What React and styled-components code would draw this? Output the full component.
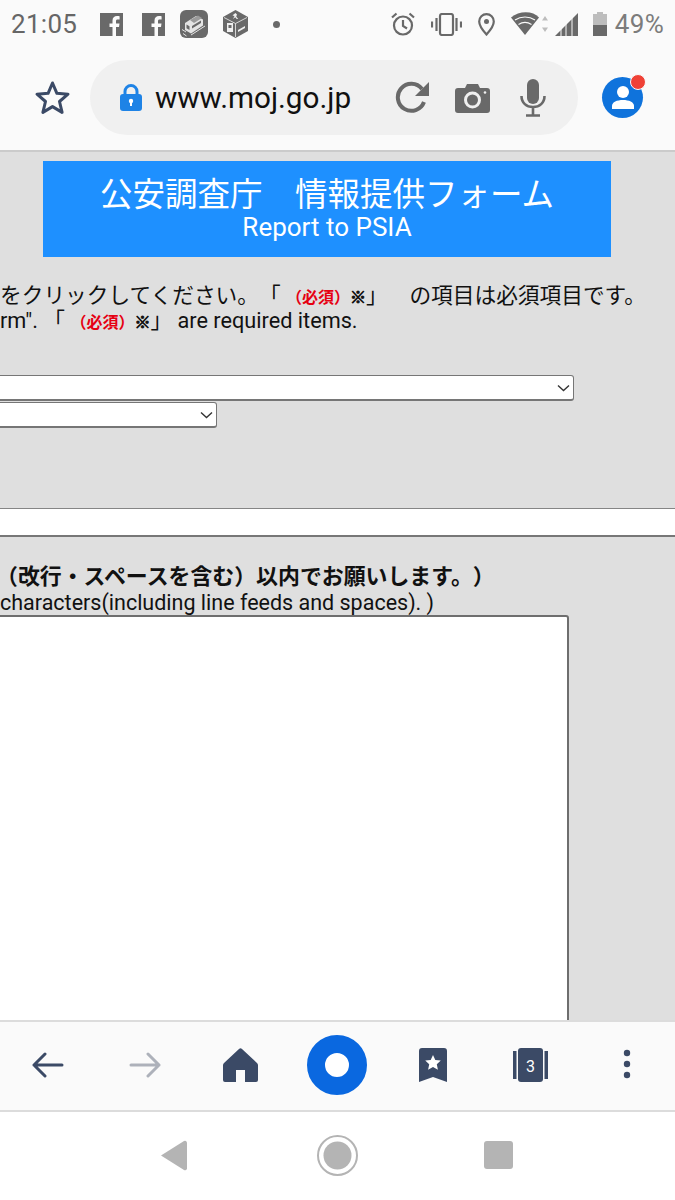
import styled, { createGlobalStyle } from "styled-components";

const GlobalStyle = createGlobalStyle`
    html, body {
        margin: 0;
        padding: 0;
        width: 675px;
        height: 1200px;
        overflow: hidden;
        background: #fff;
        font-family: Roboto, "Noto Sans CJK JP", sans-serif;
        text-spacing-trim: space-all;
    }
`;

const Screen = styled.div`
    width: 675px;
    height: 1200px;
    display: flex;
    flex-direction: column;
    overflow: hidden;
`;

const TopBar = styled.header`
    height: 150px;
    flex: none;
    background: #fafafa;
    border-bottom: 2px solid #cbcbcb;
    display: flex;
    flex-direction: column;
`;

const StatusBar = styled.div`
    height: 46px;
    box-sizing: border-box;
    padding: 2px 11px 0 11px;
    display: flex;
    align-items: center;
    justify-content: space-between;
    color: #6b6b6b;
`;

const StatusGroup = styled.div`
    display: flex;
    align-items: center;
`;

const Slot = styled.span`
    display: flex;
    flex: none;
    margin-left: ${(p) => p.$ml || 0}px;
`;

const StatusText = styled.span`
    font-size: 26px;
    line-height: 44px;
    letter-spacing: 0.3px;
    color: ${(p) => p.$color || "#666"};
`;

const AddressRow = styled.div`
    display: flex;
    align-items: center;
    padding: 14px 0 0 34px;
`;

const UrlPill = styled.div`
    width: 488px;
    height: 75px;
    margin-left: 19px;
    border-radius: 38px;
    background: #f0f0f0;
    display: flex;
    align-items: center;
    padding-left: 30px;
    box-sizing: border-box;
`;

const UrlText = styled.span`
    margin-left: 13px;
    width: 240px;
    font-size: 29.7px;
    color: #111;
`;

const Avatar = styled.div`
    position: relative;
    width: 41px;
    height: 41px;
    margin-left: 24px;
    border-radius: 50%;
    background: #0f73dc;
    display: flex;
    align-items: center;
    justify-content: center;
`;

const AvatarBadge = styled.span`
    position: absolute;
    top: -3px;
    right: -3px;
    width: 14px;
    height: 14px;
    border-radius: 50%;
    background: #ef4136;
    border: 1.5px solid #fafafa;
`;

const Content = styled.main`
    flex: 1;
    min-height: 0;
    background: #dfdfdf;
    overflow: hidden;
    display: flex;
    flex-direction: column;
`;

const Banner = styled.div`
    width: 568px;
    height: 96px;
    margin: 9px 0 0 43px;
    flex: none;
    background: #1e90ff;
    color: #fff;
    display: flex;
    flex-direction: column;
    align-items: center;
    padding-top: 10px;
    box-sizing: border-box;
`;

const BannerTitle = styled.div`
    font-size: 32.5px;
    line-height: 41px;
    font-family: "Noto Sans CJK JP", sans-serif;
    white-space: nowrap;
`;

const BannerSub = styled.div`
    font-size: 26px;
    line-height: 30px;
    white-space: nowrap;
`;

const Notice = styled.div`
    margin-top: 26px;
    flex: none;
`;

const NoticeLine = styled.div`
    height: 25px;
    font-size: 21.7px;
    line-height: 25px;
    color: #111;
    white-space: nowrap;
`;

const Required = styled.b`
    color: #e60012;
    font-size: 16px;
    font-family: "Noto Sans CJK JP", sans-serif;
`;

const Mark = styled.b`
    font-size: 16px;
    font-family: "Noto Sans CJK JP", sans-serif;
    -webkit-text-stroke: 0.9px #111;
`;

const SelectBox = styled.div`
    width: ${(p) => p.$width}px;
    height: 26px;
    margin-left: -4px;
    margin-top: ${(p) => p.$mt || 0}px;
    flex: none;
    box-sizing: border-box;
    background: #fff;
    border: 1px solid #767676;
    border-bottom-width: 2px;
    border-radius: 3px;
    display: flex;
    align-items: center;
    justify-content: flex-end;
    padding-right: 3px;
`;

const WhiteBand = styled.div`
    height: 26px;
    margin-top: 80px;
    flex: none;
    background: #fff;
    border-top: 1px solid #858585;
    border-bottom: 2px solid #777;
`;

const BoldLine = styled.div`
    margin-top: 23px;
    margin-left: 7px;
    font-size: 21.9px;
    line-height: 30px;
    font-weight: 700;
    color: #111;
    white-space: nowrap;
    font-family: "Noto Sans CJK JP", sans-serif;
    text-spacing-trim: trim-start;
`;

const ClosingParen = styled.span`
    display: inline-block;
`;

const SubLine = styled.div`
    font-size: 21.5px;
    line-height: 24px;
    margin-top: 1px;
    color: #111;
    white-space: nowrap;
`;

const MessageArea = styled.textarea`
    display: block;
    flex: none;
    width: 575px;
    height: 460px;
    margin-left: -6px;
    box-sizing: border-box;
    background: #fff;
    border: 2px solid #6e6e6e;
    border-radius: 3px;
    resize: none;
    outline: none;
`;

const BottomBar = styled.nav`
    height: 92px;
    flex: none;
    box-sizing: border-box;
    padding-bottom: 2px;
    background: #fafafa;
    border-top: 2px solid #dcdcdc;
    border-bottom: 2px solid #dcdcdc;
    display: flex;
    align-items: center;
`;

const NavBar = styled.div`
    height: 88px;
    flex: none;
    box-sizing: border-box;
    padding-bottom: 2px;
    background: #fff;
    display: flex;
    align-items: center;
`;

const Icon = ({ w, h, vb, children, fill = "none" }) => (
    <svg width={w} height={h} viewBox={vb || `0 0 ${w} ${h}`} fill={fill}>
        {children}
    </svg>
);

const navy = "#3b4a66";
const gray = "#696969";

function FacebookIcon() {
    return (
        <Icon w={23} h={23}>
            <rect width="23" height="23" fill={gray} />
            <path d="M16 23v-9h3l.5-3.6H16V8.200c0-1 .4-1.700 1.800-1.700h1.800V3.300c-.4 0-1.400-.2-2.600-.2-2.700 0-4.500 1.600-4.500 4.600v2.700H9.500V14h3v9z" fill="#fafafa" />
        </Icon>
    );
}

function TrainIcon() {
    return (
        <Icon w={28} h={28}>
            <rect width="28" height="28" rx="6" fill={gray} />
            <path d="M5 13l11-7 7 3.500v6l-12 8-6-3.500z" fill="#e4e4e4" />
            <path d="M10 10l8-4.500 4 2.500-8 5z" fill="#9a9a9a" />
            <path d="M6.500 14.500l3 1.800v3.700l-3-1.800zM12 16l9-5.500v2.500l-9 5.500z" fill={gray} />
            <path d="M3 23.500l3.500 2.500M2 19.500l4 2.500M11 25l14-9" stroke="#e4e4e4" strokeWidth="1" />
        </Icon>
    );
}

function CubeIcon() {
    return (
        <Icon w={25} h={28}>
            <path d="M12.500 0L25 7v14l-12.500 7L0 21V7z" fill={gray} />
            <path d="M12.500 3l1.500 1.500-.8 2 2 2.500h-1.500l-1.500-1.800L10 9l1.500-3-2-.6 1-1z" fill="#f0f0f0" />
            <path d="M1 7.500l11.500 6v13.500M24 7.500l-11.500 6" stroke="#f0f0f0" strokeWidth=".8" />
            <rect x="4" y="13" width="6" height="9" fill="#efefef" />
            <rect x="5.500" y="15" width="3" height="3" fill={gray} />
            <path d="M15 20l7-4v2l-7 4z" fill="#efefef" />
        </Icon>
    );
}

function AlarmIcon() {
    return (
        <Icon w={24} h={24}>
            <circle cx="12" cy="13.500" r="9" stroke={gray} strokeWidth="2.200" />
            <path d="M12 8v6l4 2.500M1 5.500L5.500 1.500M23 5.500L18.500 1.500" stroke={gray} strokeWidth="2.200" />
        </Icon>
    );
}

function VibrateIcon() {
    return (
        <Icon w={31} h={23}>
            <rect x="9" y="1" width="13" height="21" rx="2" stroke={gray} strokeWidth="2.200" />
            <path d="M5.500 5v13M25.500 5v13M1 8.500v6M30 8.500v6" stroke={gray} strokeWidth="2.200" />
        </Icon>
    );
}

function PinIcon() {
    return (
        <Icon w={17} h={23}>
            <path d="M8.500 1.200c-4 0-7.300 3.200-7.300 7.300 0 5 7.300 13 7.300 13s7.300-8 7.300-13c0-4.100-3.300-7.300-7.300-7.300z" stroke={gray} strokeWidth="2.200" />
            <circle cx="8.500" cy="8.500" r="2.500" fill={gray} />
        </Icon>
    );
}

function WifiIcon() {
    return (
        <Icon w={38} h={24}>
            <path d="M0 5.500C8 -1.500 22 -1.500 28 5.500L14 23z" fill={gray} />
            <path d="M4 8c6-4 14-4 20 0M7.500 12.500c4-2.500 9-2.500 13 0" stroke="#fafafa" strokeWidth="1.200" />
            <path d="M34 4l3 4.500h-6zM34 20l3-4.500h-6z" fill="#bdbdbd" />
        </Icon>
    );
}

function SignalIcon() {
    return (
        <Icon w={23} h={23}>
            <path d="M23 0v23H0z" fill={gray} />
            <path d="M6 16v7M11 11v12M17 5v18" stroke="#fafafa" strokeWidth="1" />
        </Icon>
    );
}

function BatteryIcon() {
    return (
        <Icon w={14} h={24}>
            <path d="M4 0h6v2h4v22H0V2h4z" fill="#bdbdbd" />
            <rect y="13" width="14" height="11" fill={gray} />
        </Icon>
    );
}

function StarOutline() {
    return (
        <Icon w={37} h={35} vb="0 0 37 35">
            <path d="M18.500 3l4.400 10.300 11.100.9-8.500 7.300 2.600 10.900-9.600-5.800-9.600 5.800 2.600-10.900L3 14.200l11.100-.9z" stroke={navy} strokeWidth="3" strokeLinejoin="round" />
        </Icon>
    );
}

function LockIcon() {
    return (
        <Icon w={22} h={27}>
            <path d="M5 12V7.500a6 6 0 0 1 12 0V12" stroke="#1e83e6" strokeWidth="3" />
            <rect y="10" width="22" height="17" rx="3" fill="#1e83e6" />
            <circle cx="11" cy="17" r="2.200" fill="#fff" />
            <rect x="10" y="18" width="2" height="4" fill="#fff" />
        </Icon>
    );
}

function ReloadIcon() {
    return (
        <Icon w={35} h={35}>
            <path d="M29 22a13.500 13.500 0 1 1-2-13" stroke={gray} strokeWidth="4" />
            <path d="M34 2v14H20z" fill={gray} />
        </Icon>
    );
}

function CameraIcon() {
    return (
        <Icon w={35} h={30}>
            <path d="M3 5h7l2-4h11l2 4h7a3 3 0 0 1 3 3v19a3 3 0 0 1-3 3H3a3 3 0 0 1-3-3V8a3 3 0 0 1 3-3z" fill={gray} />
            <circle cx="17.500" cy="17" r="7" fill="none" stroke="#f0f0f0" strokeWidth="3" />
            <circle cx="30" cy="9.500" r="1.300" fill="#f0f0f0" />
        </Icon>
    );
}

function MicIcon() {
    return (
        <Icon w={26} h={38}>
            <rect x="7" y="0" width="12" height="25" rx="6" fill={gray} />
            <path d="M1.500 17c0 7 5 11 11.500 11s11.500-4 11.500-11M13 28v8M6 36.500h14" stroke={gray} strokeWidth="2.600" />
        </Icon>
    );
}

function PersonIcon() {
    return (
        <Icon w={24} h={25}>
            <circle cx="12" cy="7" r="6" fill="#fff" />
            <path d="M1 24v-3c0-4 5-6 11-6s11 2 11 6v3z" fill="#fff" />
        </Icon>
    );
}

function ChevronIcon() {
    return (
        <Icon w={13} h={8}>
            <path d="M1 1.500l5.500 5 5.500-5" stroke="#333" strokeWidth="1.400" />
        </Icon>
    );
}

function ArrowIcon({ color, flip }) {
    return (
        <Icon w={32} h={26}>
            <path
                d={flip ? "M30 13H2M19 2l11 11-11 11" : "M2 13h28M13 2L2 13l11 11"}
                stroke={color}
                strokeWidth="3"
                strokeLinecap="round"
                strokeLinejoin="round"
            />
        </Icon>
    );
}

function HomeIcon() {
    return (
        <Icon w={35} h={34}>
            <path d="M16 1a2.200 2.200 0 0 1 3 0l15 14a3 3 0 0 1 1 2v15a2 2 0 0 1-2 2H22V22h-9v12H2a2 2 0 0 1-2-2V17a3 3 0 0 1 1-2z" fill={navy} />
        </Icon>
    );
}

function RingIcon() {
    return (
        <Icon w={60} h={60}>
            <circle cx="30" cy="30" r="21" stroke="#0a68e0" strokeWidth="18" fill="#fff" />
        </Icon>
    );
}

function BookmarkIcon() {
    return (
        <Icon w={28} h={34}>
            <path d="M3 0h22a3 3 0 0 1 3 3v31l-14-5-14 5V3a3 3 0 0 1 3-3z" fill={navy} />
            <path d="M14 7l2.300 5 5.500.6-4 3.700 1.100 5.400-4.900-2.700-4.900 2.700 1.100-5.400-4-3.700 5.500-.6z" fill="#fff" />
        </Icon>
    );
}

function TabsIcon() {
    return (
        <Icon w={35} h={34}>
            <rect x="0" y="3" width="3.500" height="28" fill={navy} />
            <rect x="31.500" y="3" width="3.500" height="28" fill={navy} />
            <rect x="5" y="0" width="25" height="34" rx="3" fill={navy} />
            <text x="17.500" y="24" textAnchor="middle" fontSize="16" fontFamily="Roboto, sans-serif" fill="#fff">3</text>
        </Icon>
    );
}

function DotsIcon() {
    return (
        <Icon w={8} h={32}>
            <circle cx="4" cy="4" r="3.200" fill={navy} />
            <circle cx="4" cy="15" r="3.200" fill={navy} />
            <circle cx="4" cy="26" r="3.200" fill={navy} />
        </Icon>
    );
}

function BackTriangle() {
    return (
        <Icon w={27} h={31}>
            <path d="M1 15.500L24 1a2 2 0 0 1 3 1.500v26a2 2 0 0 1-3 1.500z" fill="#b4b4b4" />
        </Icon>
    );
}

function HomeCircle() {
    return (
        <Icon w={41} h={41}>
            <circle cx="20.500" cy="20.500" r="19.500" stroke="#b4b4b4" strokeWidth="2" />
            <circle cx="20.500" cy="20.500" r="14" fill="#b4b4b4" />
        </Icon>
    );
}

function RecentSquare() {
    return (
        <Icon w={29} h={28}>
            <rect width="29" height="28" rx="3" fill="#b4b4b4" />
        </Icon>
    );
}

function App() {
    return (
        <Screen>
            <GlobalStyle />
            <TopBar>
                <StatusBar>
                    <StatusGroup>
                        <StatusText>21:05</StatusText>
                        <Slot $ml={23}><FacebookIcon /></Slot>
                        <Slot $ml={19}><FacebookIcon /></Slot>
                        <Slot $ml={15}><TrainIcon /></Slot>
                        <Slot $ml={15}><CubeIcon /></Slot>
                        <Slot $ml={25}>
                            <Icon w={7} h={7}><circle cx="3.500" cy="3.500" r="3.500" fill={gray} /></Icon>
                        </Slot>
                    </StatusGroup>
                    <StatusGroup>
                        <AlarmIcon />
                        <Slot $ml={16}><VibrateIcon /></Slot>
                        <Slot $ml={16}><PinIcon /></Slot>
                        <Slot $ml={16}><WifiIcon /></Slot>
                        <Slot $ml={6}><SignalIcon /></Slot>
                        <Slot $ml={15}><BatteryIcon /></Slot>
                        <Slot $ml={8}><StatusText $color="#7c7c7c">49%</StatusText></Slot>
                    </StatusGroup>
                </StatusBar>
                <AddressRow>
                    <StarOutline />
                    <UrlPill>
                        <LockIcon />
                        <UrlText>www.moj.go.jp</UrlText>
                        <ReloadIcon />
                        <Slot $ml={25}><CameraIcon /></Slot>
                        <Slot $ml={30}><MicIcon /></Slot>
                    </UrlPill>
                    <Avatar>
                        <PersonIcon />
                        <AvatarBadge />
                    </Avatar>
                </AddressRow>
            </TopBar>

            <Content>
                <Banner>
                    <BannerTitle>公安調査庁　情報提供フォーム</BannerTitle>
                    <BannerSub>Report to PSIA</BannerSub>
                </Banner>
                <Notice>
                    <NoticeLine>
                        をクリックしてください。「 <Required>（必須）</Required><Mark>※</Mark>」　の項目は必須項目です。
                    </NoticeLine>
                    <NoticeLine>
                        rm". 「 <Required>（必須）</Required><Mark>※</Mark>」 are required items.
                    </NoticeLine>
                </Notice>
                <SelectBox $width={578} $mt={42}><ChevronIcon /></SelectBox>
                <SelectBox $width={221} $mt={1}><ChevronIcon /></SelectBox>
                <WhiteBand />
                <BoldLine>（改行・スペースを含む）以内でお願いします。<ClosingParen>）</ClosingParen></BoldLine>
                <SubLine>characters(including line feeds and spaces). )</SubLine>
                <MessageArea />
            </Content>

            <BottomBar>
                <Slot $ml={32}><ArrowIcon color={navy} /></Slot>
                <Slot $ml={65}><ArrowIcon color="#adb1ba" flip /></Slot>
                <Slot $ml={62}><HomeIcon /></Slot>
                <Slot $ml={49}><RingIcon /></Slot>
                <Slot $ml={52}><BookmarkIcon /></Slot>
                <Slot $ml={66}><TabsIcon /></Slot>
                <Slot $ml={75}><DotsIcon /></Slot>
            </BottomBar>
            <NavBar>
                <Slot $ml={160}><BackTriangle /></Slot>
                <Slot $ml={130}><HomeCircle /></Slot>
                <Slot $ml={126}><RecentSquare /></Slot>
            </NavBar>
        </Screen>
    );
}

export default App;
